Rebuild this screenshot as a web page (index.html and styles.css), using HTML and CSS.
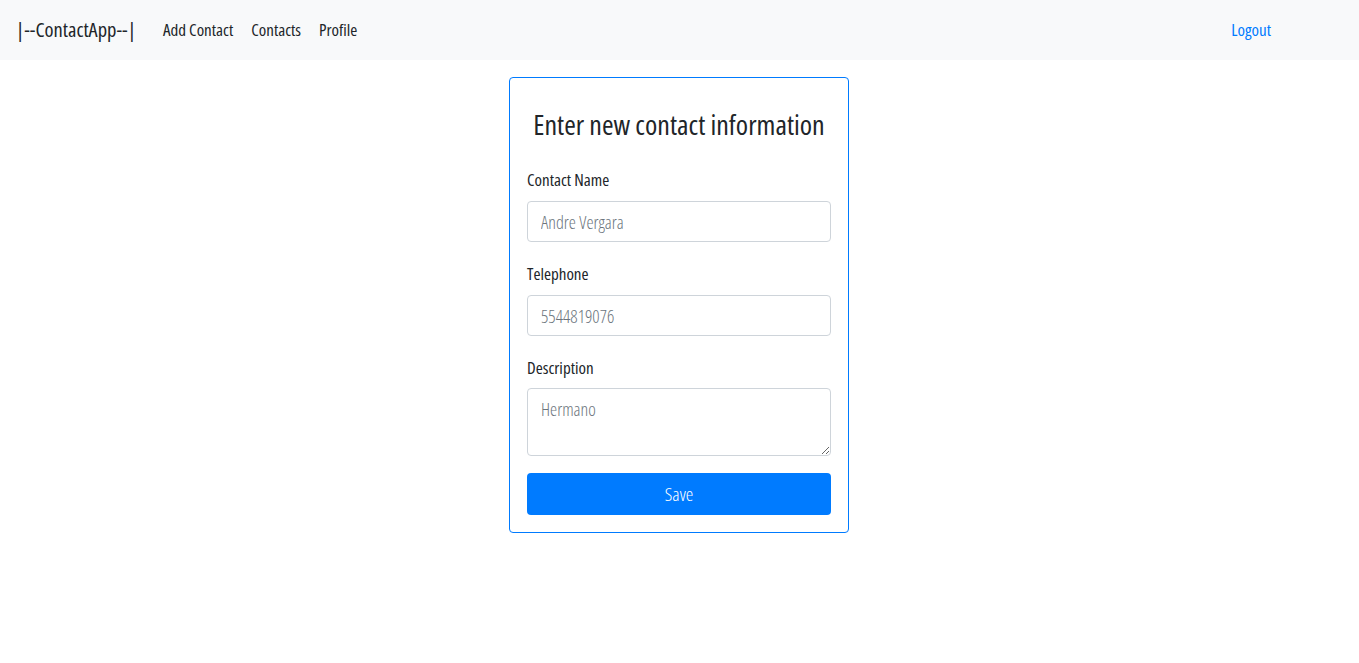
FILE: index.html
```html
<!DOCTYPE html>
<html lang="en">
<head>
<meta charset="utf-8">
<title>ContactApp</title>
<link rel="stylesheet" href="styles.css">
</head>
<body>
<nav class="navbar">
  <a class="brand" href="#">|--ContactApp--|</a>
  <ul class="nav-links">
    <li><a href="#">Add Contact</a></li>
    <li><a href="#">Contacts</a></li>
    <li><a href="#">Profile</a></li>
  </ul>
  <a class="logout" href="#">Logout</a>
</nav>
<main class="main">
  <form class="card">
    <h2 class="title">Enter new contact information</h2>
    <div class="group">
      <label class="label" for="name">Contact Name</label>
      <input class="control" id="name" type="text" placeholder="Andre Vergara">
    </div>
    <div class="group">
      <label class="label" for="tel">Telephone</label>
      <input class="control" id="tel" type="text" placeholder="5544819076">
    </div>
    <div class="group group-last">
      <label class="label" for="desc">Description</label>
      <textarea class="control area" id="desc" placeholder="Hermano"></textarea>
    </div>
    <button class="btn" type="button">Save</button>
  </form>
</main>
</body>
</html>
```
FILE: styles.css
```css
* { box-sizing: border-box; }
body {
  margin: 0;
  font-family: "Open Sans", sans-serif;
  font-stretch: 75%;
  color: #212529;
  background: #fff;
}
a { text-decoration: none; }
.navbar {
  height: 60px;
  background: #f8f9fa;
  display: flex;
  align-items: center;
  padding: 0 88px 2px 16px;
}
.brand {
  font-size: 20.5px;
  color: #212529;
  margin-right: 27px;
}
.nav-links {
  list-style: none;
  margin: 0;
  padding: 0;
  display: flex;
  gap: 18px;
  flex: 1;
}
.nav-links a {
  font-size: 17px;
  color: #212529;
}
.logout {
  font-size: 17px;
  color: #007bff;
}
.main {
  display: flex;
  justify-content: center;
  padding: 17px 1px 0 0;
}
.card {
  width: 340px;
  border: 1px solid #007bff;
  border-radius: 4px;
  padding: 17px;
}
.title {
  margin: 0 0 15px;
  font-weight: normal;
  font-size: 28px;
  line-height: 58px;
  text-align: center;
  white-space: nowrap;
}
.group { margin-bottom: 20px; }
.group-last { margin-bottom: 17px; }
.label {
  display: block;
  font-size: 17px;
  line-height: 24px;
  margin-bottom: 9px;
}
.group-last .label { margin-bottom: 8px; }
.control {
  display: block;
  width: 100%;
  height: 41px;
  border: 1px solid #ced4da;
  border-radius: 4px;
  padding: 0 13px;
  font-family: inherit;
  font-stretch: 75%;
  font-weight: 350;
  font-size: 18px;
  color: #495057;
  background: #fff;
}
.control::placeholder { color: #6c757d; }
.area {
  height: 68px;
  padding-top: 8px;
  resize: vertical;
}
.btn {
  display: block;
  width: 100%;
  height: 42px;
  border: none;
  border-radius: 4px;
  background: #007bff;
  color: #fff;
  font-family: inherit;
  font-stretch: 75%;
  font-weight: 350;
  font-size: 19px;
}
```
